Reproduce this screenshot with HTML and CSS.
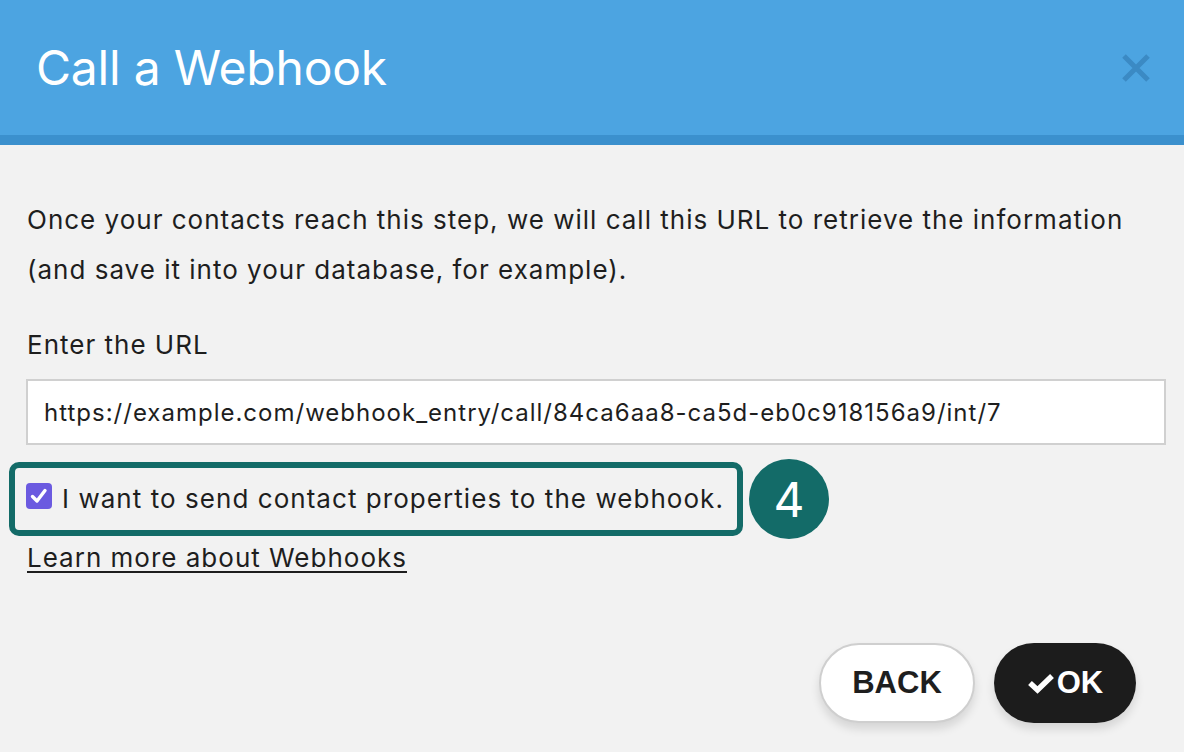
FILE: index.html
```html
<!DOCTYPE html>
<html lang="en">
<head>
<meta charset="utf-8">
<title>Call a Webhook</title>
<link rel="stylesheet" href="styles.css">
</head>
<body>
<div class="dialog">
  <header class="dialog-header">
    <h1 class="dialog-title">Call a Webhook</h1>
    <button class="close-btn" aria-label="Close">
      <svg width="32" height="32" viewBox="0 0 32 32"><path d="M4 4 L28 28 M28 4 L4 28" stroke="#3b8ac4" stroke-width="5" fill="none"/></svg>
    </button>
  </header>
  <main class="dialog-body">
    <p class="intro">Once your contacts reach this step, we will call this URL to retrieve the information (and save it into your database, for example).</p>
    <label class="field-label" for="url">Enter the URL</label>
    <input id="url" class="url-input" type="text" value="https://example.com/webhook_entry/call/84ca6aa8-ca5d-eb0c918156a9/int/7">
    <div class="check-row">
      <label class="check-highlight">
        <span class="checkbox">
          <svg width="20" height="20" viewBox="0 0 20 20"><path d="M3.5 10.5 L8 15 L16 4.5" stroke="#fff" stroke-width="3.4" fill="none" stroke-linecap="round" stroke-linejoin="round"/></svg>
        </span>
        <span class="check-text">I want to send contact properties to the webhook.</span>
      </label>
      <span class="step-badge">4</span>
    </div>
    <a class="learn-link" href="#">Learn more about Webhooks</a>
    <div class="actions">
      <button class="btn btn-back">BACK</button>
      <button class="btn btn-ok">
        <svg width="28" height="22" viewBox="0 0 28 22"><path d="M3 11 L10.5 18 L25 4" stroke="#fff" stroke-width="5.5" fill="none" stroke-linejoin="miter"/></svg>
        OK
      </button>
    </div>
  </main>
</div>
</body>
</html>
```

FILE: styles.css
```css
* { box-sizing: border-box; }
html, body {
  margin: 0;
  padding: 0;
  width: 1184px;
  height: 752px;
  overflow: hidden;
  background: #f2f2f2;
  font-family: Inter, "Noto Sans", sans-serif;
  color: #1e1e1e;
}
.dialog {
  display: flex;
  flex-direction: column;
  height: 752px;
}
.dialog-header {
  height: 145px;
  background: #4ca4e1;
  border-bottom: 10px solid #3b90cd;
  display: flex;
  align-items: center;
  justify-content: space-between;
  padding: 0 32px 0 36px;
}
.dialog-title {
  margin: 0;
  font-weight: 400;
  font-size: 48px;
  color: #fff;
  letter-spacing: -0.2px;
}
.close-btn {
  background: none;
  border: 0;
  padding: 0;
  width: 32px;
  height: 32px;
  display: flex;
  cursor: pointer;
}
.dialog-body {
  flex: 1;
  padding: 50px 18px 0 26px;
  display: flex;
  flex-direction: column;
  font-size: 26px;
  letter-spacing: 1px;
}
.intro {
  margin: 0 0 0 1px;
  line-height: 50px;
}
.field-label {
  margin: 35px 0 0 1px;
  line-height: 30px;
}
.url-input {
  margin-top: 19px;
  width: 1140px;
  height: 66px;
  border: 2px solid #d0d0d0;
  background: #fff;
  padding: 0 16px;
  font-family: inherit;
  font-size: 24px;
  letter-spacing: 1px;
  color: #1e1e1e;
  outline: none;
}
.check-row {
  display: flex;
  align-items: center;
  margin: 14px 0 0 -17px;
  gap: 6px;
}
.check-highlight {
  display: flex;
  align-items: center;
  gap: 10px;
  height: 74px;
  padding: 0 13px 0 11px;
  border: 6px solid #136b68;
  border-radius: 10px;
}
.checkbox {
  width: 26px;
  height: 26px;
  border-radius: 4px;
  background: #6b5ae0;
  display: flex;
  align-items: center;
  justify-content: center;
  margin-top: -6px;
}
.check-text {
  line-height: 30px;
  letter-spacing: 1.05px;
}
.step-badge {
  width: 80px;
  height: 80px;
  border-radius: 50%;
  background: #136b68;
  color: #fff;
  font-size: 48px;
  letter-spacing: 0;
  display: flex;
  align-items: center;
  justify-content: center;
}
.learn-link {
  align-self: flex-start;
  margin: 4px 0 0 1px;
  line-height: 30px;
  color: #1e1e1e;
  text-decoration: underline;
  text-underline-offset: 4px;
}
.actions {
  display: flex;
  justify-content: flex-end;
  gap: 19px;
  margin-top: 70px;
  padding-right: 30px;
}
.btn {
  height: 80px;
  border-radius: 40px;
  font-family: "Liberation Sans", Arial, sans-serif;
  font-weight: 700;
  font-size: 31px;
  letter-spacing: 0;
  display: flex;
  align-items: center;
  justify-content: center;
  cursor: pointer;
  box-shadow: 0 6px 10px rgba(0,0,0,0.12);
}
.btn-back {
  width: 156px;
  background: #fff;
  color: #1e1e1e;
  border: 2px solid #cfcfcf;
}
.btn-ok {
  width: 142px;
  background: #1c1c1c;
  color: #fff;
  border: 0;
  gap: 2px;
}
```
